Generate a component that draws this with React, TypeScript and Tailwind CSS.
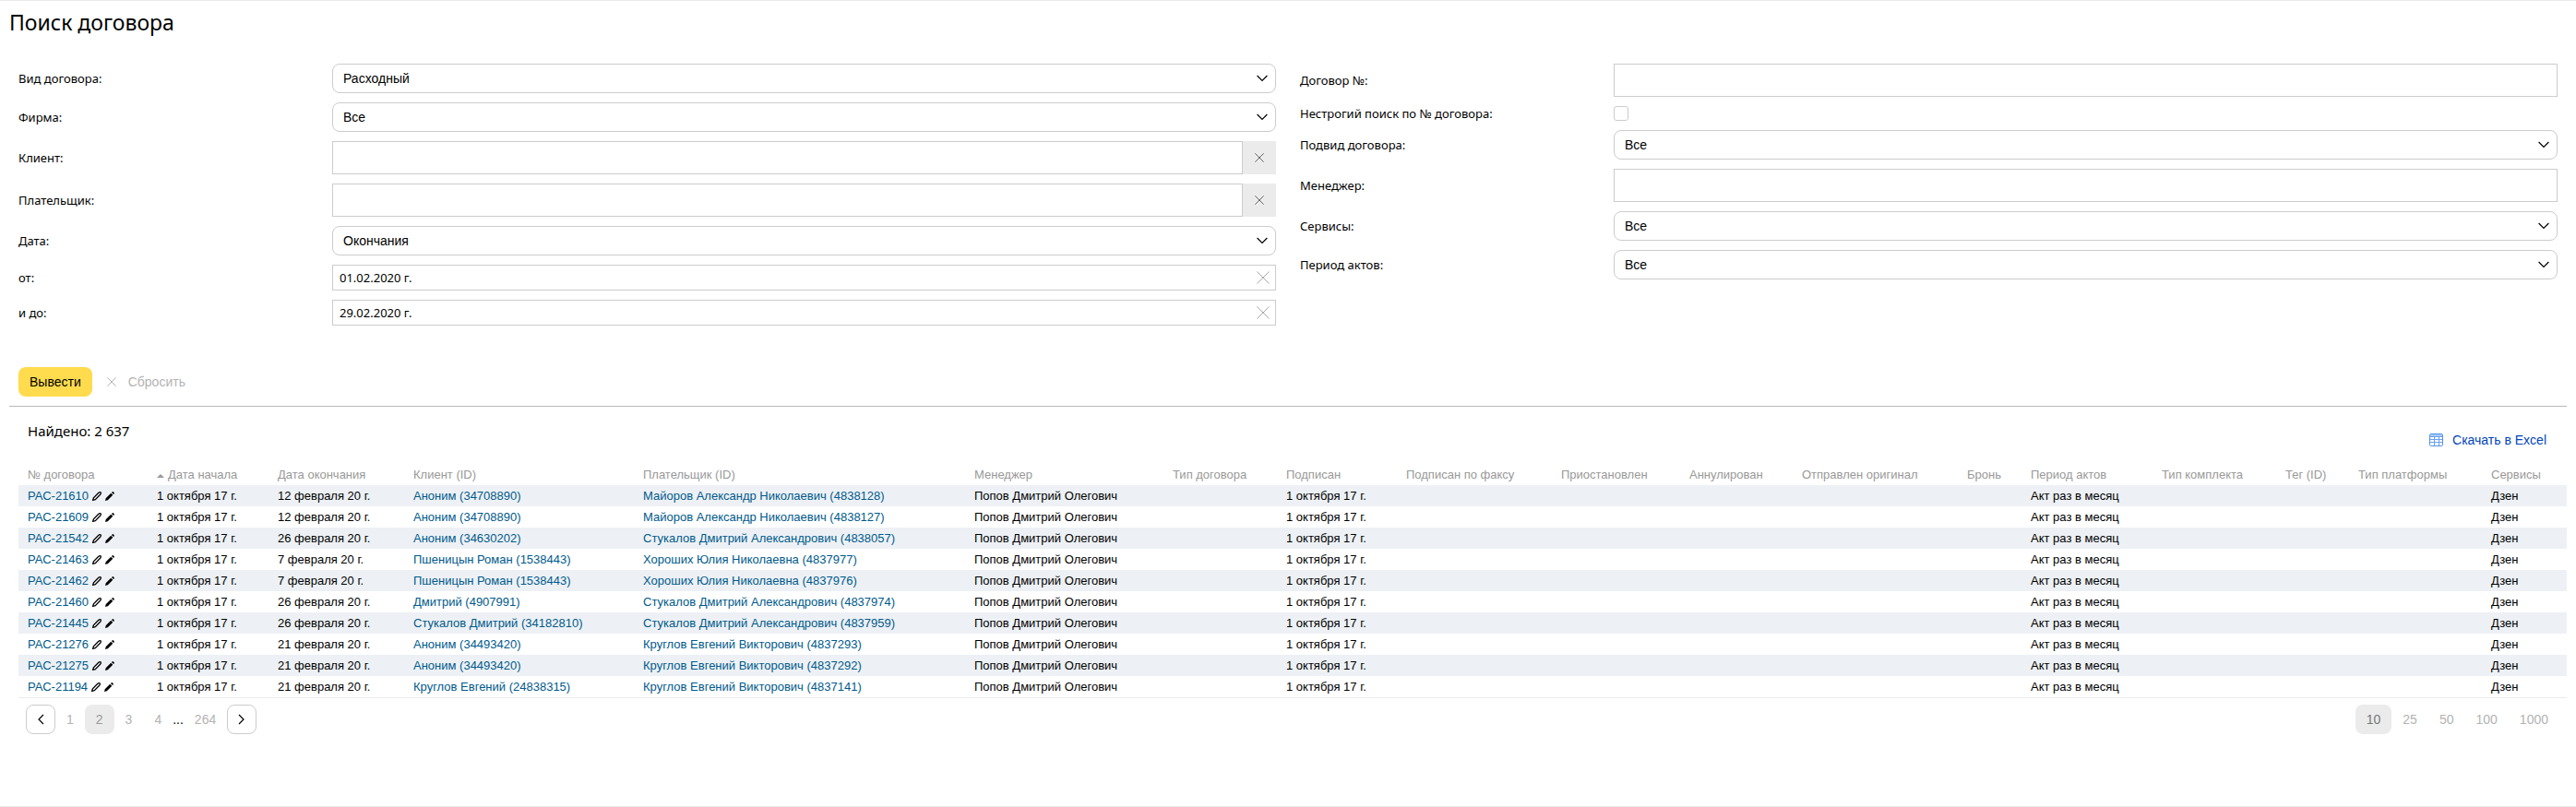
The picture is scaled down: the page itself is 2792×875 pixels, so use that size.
import { useState } from "react";
import type { ReactNode } from "react";

type Contract = {
  id: string;
  end: string;
  client: string;
  payer: string;
};

const contracts: Contract[] = [
  { id: "РАС-21610", end: "12 февраля 20 г.", client: "Аноним (34708890)", payer: "Майоров Александр Николаевич (4838128)" },
  { id: "РАС-21609", end: "12 февраля 20 г.", client: "Аноним (34708890)", payer: "Майоров Александр Николаевич (4838127)" },
  { id: "РАС-21542", end: "26 февраля 20 г.", client: "Аноним (34630202)", payer: "Стукалов Дмитрий Александрович (4838057)" },
  { id: "РАС-21463", end: "7 февраля 20 г.", client: "Пшеницын Роман (1538443)", payer: "Хороших Юлия Николаевна (4837977)" },
  { id: "РАС-21462", end: "7 февраля 20 г.", client: "Пшеницын Роман (1538443)", payer: "Хороших Юлия Николаевна (4837976)" },
  { id: "РАС-21460", end: "26 февраля 20 г.", client: "Дмитрий (4907991)", payer: "Стукалов Дмитрий Александрович (4837974)" },
  { id: "РАС-21445", end: "26 февраля 20 г.", client: "Стукалов Дмитрий (34182810)", payer: "Стукалов Дмитрий Александрович (4837959)" },
  { id: "РАС-21276", end: "21 февраля 20 г.", client: "Аноним (34493420)", payer: "Круглов Евгений Викторович (4837293)" },
  { id: "РАС-21275", end: "21 февраля 20 г.", client: "Аноним (34493420)", payer: "Круглов Евгений Викторович (4837292)" },
  { id: "РАС-21194", end: "21 февраля 20 г.", client: "Круглов Евгений (24838315)", payer: "Круглов Евгений Викторович (4837141)" },
];

const columns = [
  { name: "№ договора", width: "w-[140px]" },
  { name: "Дата начала", width: "w-[131px]" },
  { name: "Дата окончания", width: "w-[147px]" },
  { name: "Клиент (ID)", width: "w-[249px]" },
  { name: "Плательщик (ID)", width: "w-[359px]" },
  { name: "Менеджер", width: "w-[215px]" },
  { name: "Тип договора", width: "w-[123px]" },
  { name: "Подписан", width: "w-[130px]" },
  { name: "Подписан по факсу", width: "w-[168px]" },
  { name: "Приостановлен", width: "w-[139px]" },
  { name: "Аннулирован", width: "w-[122px]" },
  { name: "Отправлен оригинал", width: "w-[179px]" },
  { name: "Бронь", width: "w-[69px]" },
  { name: "Период актов", width: "w-[142px]" },
  { name: "Тип комплекта", width: "w-[134px]" },
  { name: "Тег (ID)", width: "w-[79px]" },
  { name: "Тип платформы", width: "w-[144px]" },
  { name: "Сервисы", width: "w-[92px]" },
];

function Cross({ className }: { className: string }) {
  return (
    <svg viewBox="0 0 12 12" className={className} fill="none" stroke="currentColor" strokeWidth="1" aria-hidden="true">
      <path d="M0.4 0.4 11.6 11.6M11.6 0.4 0.4 11.6" vectorEffect="non-scaling-stroke" />
    </svg>
  );
}

function PencilOutline() {
  return (
    <svg viewBox="0 0 10 10" className="size-[10px]" fill="none" stroke="#000" strokeWidth="1.3" aria-hidden="true">
      <path d="M0.7 9.3 1.4 6.8 6.6 1.5 Q8 0.3 9.1 0.9 Q9.8 2 8.6 3.3 L3.3 8.6 Z" />
    </svg>
  );
}

function PencilSolid() {
  return (
    <svg viewBox="0 0 10 10" className="size-[10px]" fill="#000" aria-hidden="true">
      <path d="M0 10 0.7 7.2 6.2 1.7 8.3 3.8 2.8 9.3Z M6.9 1 7.6 0.4 Q8.4 -0.2 9.1 0.5 L9.5 0.9 Q10.2 1.6 9.6 2.4 L9 3.1Z" />
    </svg>
  );
}

function SheetIcon() {
  return (
    <svg viewBox="0 0 15 14" className="h-[14px] w-[15px]" fill="none" aria-hidden="true">
      <rect x="0.5" y="0.5" width="14" height="13" rx="1" fill="#fff" />
      <path d="M1 1h13v2.5H1z" fill="#a9cbf7" />
      <path d="M1 6.5h13M1 9.5h13M5.5 3.5v10M10.5 3.5v10" stroke="#6aa2ee" />
      <path d="M1 3.5h13" stroke="#6aa2ee" />
      <rect x="0.5" y="0.5" width="14" height="13" rx="1" stroke="#4f90e8" />
    </svg>
  );
}

function Row({ id, label, children }: { id: string; label: string; children: ReactNode }) {
  return (
    <div className="flex items-center">
      <label htmlFor={id} className="w-1/4 max-w-[340px] shrink-0 text-[13px] leading-4">
        {label}
      </label>
      <div className="flex min-w-0 flex-1">{children}</div>
    </div>
  );
}

function SelectRow({ id, label, value }: { id: string; label: string; value: string }) {
  return (
    <Row id={id} label={label}>
      <div className="relative flex-1">
        <select
          id={id}
          className="block h-8 w-full appearance-none rounded-lg border border-[#ccc] bg-white px-[11px] font-['Liberation_Sans',sans-serif] text-[14px]"
        >
          <option>{value}</option>
        </select>
        <svg
          viewBox="0 0 12 8"
          className="pointer-events-none absolute top-3 right-[9px] h-2 w-3"
          fill="none"
          stroke="#000"
          strokeWidth="1.2"
          aria-hidden="true"
        >
          <path d="M0.6 1 6 6.4 11.4 1" />
        </svg>
      </div>
    </Row>
  );
}

function TextRow({ id, label }: { id: string; label: string }) {
  return (
    <Row id={id} label={label}>
      <input id={id} type="text" className="h-9 min-w-0 flex-1 border border-[#ccc] px-2 text-[13px]" />
    </Row>
  );
}

function ClearableRow({ id, label }: { id: string; label: string }) {
  return (
    <Row id={id} label={label}>
      <input id={id} type="text" className="h-9 min-w-0 flex-1 border border-[#ccc] px-2 text-[13px]" />
      <button type="button" aria-label="Очистить" className="flex w-9 items-center justify-center bg-[#ebebeb] text-[#666]">
        <Cross className="size-2.5" />
      </button>
    </Row>
  );
}

function DateRow({ id, label, value }: { id: string; label: string; value: string }) {
  return (
    <Row id={id} label={label}>
      <div className="flex h-7 flex-1 items-center border border-[#ccc] pr-1.5 pl-[7px]">
        <input id={id} type="text" defaultValue={value} className="min-w-0 flex-1 pt-0.5 text-[13px] outline-none" />
        <button type="button" aria-label="Очистить" className="text-[#aaa]">
          <Cross className="size-3.5" />
        </button>
      </div>
    </Row>
  );
}

function PageButton({ children, tone = "text-[#b3b3b3]" }: { children: string; tone?: string }) {
  return (
    <button type="button" className={`h-8 rounded-lg px-3 ${tone}`}>
      {children}
    </button>
  );
}

function StepButton({ label, path }: { label: string; path: string }) {
  return (
    <button
      type="button"
      aria-label={label}
      className="flex size-8 items-center justify-center rounded-lg border border-[#ccc]"
    >
      <svg viewBox="0 0 8 12" className="h-3 w-2" fill="none" stroke="#000" strokeWidth="1.2" aria-hidden="true">
        <path d={path} />
      </svg>
    </button>
  );
}

export default function App() {
  const [loose, setLoose] = useState(false);

  return (
    <main className="border-y border-[#ebebeb] bg-white px-2.5 pt-[7px] pb-[78px] font-['Noto_Sans',sans-serif] text-black">
      <h1 className="text-[23px] leading-8">Поиск договора</h1>

      <form className="px-2.5 pt-[29px]" onSubmit={(event) => event.preventDefault()}>
        <div className="grid grid-cols-2 items-start gap-x-[26px]">
          <div className="flex flex-col gap-2.5">
            <SelectRow id="kind" label="Вид договора:" value="Расходный" />
            <SelectRow id="firm" label="Фирма:" value="Все" />
            <ClearableRow id="client" label="Клиент:" />
            <ClearableRow id="payer" label="Плательщик:" />
            <SelectRow id="date" label="Дата:" value="Окончания" />
            <DateRow id="from" label="от:" value="01.02.2020 г." />
            <DateRow id="to" label="и до:" value="29.02.2020 г." />
          </div>
          <div className="flex flex-col gap-2.5">
            <TextRow id="number" label="Договор №:" />
            <Row id="loose" label="Нестрогий поиск по № договора:">
              <input
                id="loose"
                type="checkbox"
                checked={loose}
                onChange={(event) => setLoose(event.target.checked)}
                className="size-4 appearance-none rounded-[3px] border border-[#ccc] bg-white checked:bg-[#ffdb4d]"
              />
            </Row>
            <SelectRow id="subkind" label="Подвид договора:" value="Все" />
            <TextRow id="manager" label="Менеджер:" />
            <SelectRow id="services" label="Сервисы:" value="Все" />
            <SelectRow id="period" label="Период актов:" value="Все" />
          </div>
        </div>

        <div className="mt-[45px] mb-2.5 flex font-['Liberation_Sans',sans-serif] text-[14px]">
          <button type="submit" className="h-8 rounded-lg bg-[#ffdb4d] px-3">
            Вывести
          </button>
          <button type="reset" className="flex h-8 items-center gap-[13px] px-4 text-[#b3b3b3]">
            <Cross className="size-2.5" />
            Сбросить
          </button>
        </div>
      </form>

      <hr className="border-[#b8b8b8]" />

      <section className="pl-2.5 font-['Liberation_Sans',sans-serif]">
        <div className="flex h-[62px] items-start justify-between pt-3.5 pr-[22px] pl-2.5">
          <p className="font-['Noto_Sans',sans-serif] text-[15px] leading-6">Найдено: 2 637</p>
          <a href="#excel" className="mt-2.5 flex items-center gap-2.5 text-[14px] leading-6 text-[#04b]">
            <SheetIcon />
            Скачать в Excel
          </a>
        </div>

        <table className="w-full table-fixed border-b border-[#ebebeb] text-left text-[13px] leading-[15px] whitespace-nowrap">
          <colgroup>
            {columns.map((column) => (
              <col key={column.name} className={column.width} />
            ))}
          </colgroup>
          <thead>
            <tr className="text-[#999]">
              {columns.map((column, index) => (
                <th key={column.name} scope="col" className="px-2.5 py-1 font-normal">
                  {index === 1 && (
                    <svg viewBox="0 0 8 4" className="mr-1 inline-block h-1 w-2 align-middle" fill="#999" aria-hidden="true">
                      <path d="M0 4 4 0 8 4z" />
                    </svg>
                  )}
                  {column.name}
                </th>
              ))}
            </tr>
          </thead>
          <tbody>
            {contracts.map((row) => (
              <tr key={row.id} className="odd:bg-[#edf1f5]">
                <td className="px-2.5 py-1">
                  <span className="flex items-center gap-1">
                    <a href="#contract" className="text-[#005a8c]">{row.id}</a>
                    <a href="#edit" aria-label="Редактировать"><PencilOutline /></a>
                    <a href="#edit-new" aria-label="Изменить"><PencilSolid /></a>
                  </span>
                </td>
                <td className="px-2.5 py-1">1 октября 17 г.</td>
                <td className="px-2.5 py-1">{row.end}</td>
                <td className="px-2.5 py-1"><a href="#client" className="text-[#005a8c]">{row.client}</a></td>
                <td className="px-2.5 py-1"><a href="#payer" className="text-[#005a8c]">{row.payer}</a></td>
                <td className="px-2.5 py-1">Попов Дмитрий Олегович</td>
                <td />
                <td className="px-2.5 py-1">1 октября 17 г.</td>
                <td />
                <td />
                <td />
                <td />
                <td />
                <td className="px-2.5 py-1">Акт раз в месяц</td>
                <td />
                <td />
                <td />
                <td className="px-2.5 py-1">Дзен</td>
              </tr>
            ))}
          </tbody>
        </table>

        <div className="flex justify-between pt-[7px] pr-2 pl-2 text-[14px]">
          <nav aria-label="Страницы" className="flex items-center">
            <StepButton label="Назад" path="M7 1 2 6 7 11" />
            <PageButton>1</PageButton>
            <PageButton tone="bg-[#ebebeb] text-[#999]">2</PageButton>
            <PageButton>3</PageButton>
            <PageButton>4</PageButton>
            <span>...</span>
            <PageButton>264</PageButton>
            <StepButton label="Вперёд" path="M1 1 6 6 1 11" />
          </nav>
          <div className="flex">
            <PageButton tone="bg-[#ebebeb] text-[#777]">10</PageButton>
            <PageButton>25</PageButton>
            <PageButton>50</PageButton>
            <PageButton>100</PageButton>
            <PageButton>1000</PageButton>
          </div>
        </div>
      </section>
    </main>
  );
}
